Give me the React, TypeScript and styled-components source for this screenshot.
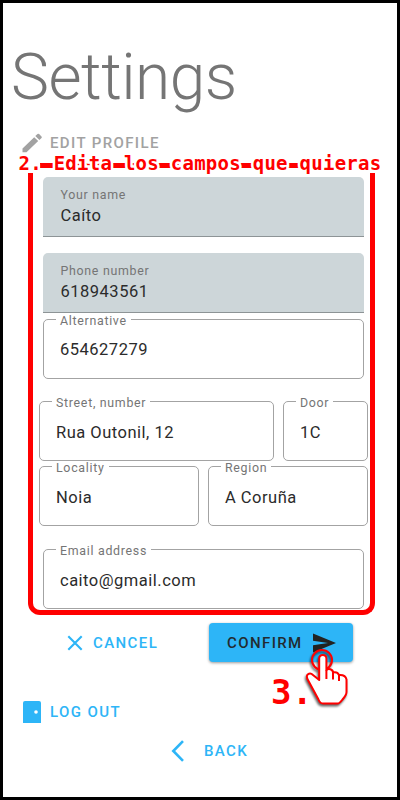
import React from "react";
import styled, { createGlobalStyle, css } from "styled-components";

const blue = "#2db5f7";
const red = "#ff0000";

const GlobalStyle = createGlobalStyle`
  *, *::before, *::after { box-sizing: border-box; }
  body { margin: 0; background: #fff; }
`;

const Screen = styled.main`
  position: relative;
  width: 400px;
  height: 800px;
  overflow: hidden;
  border: 3px solid #000;
  background: #fff;
  font-family: Roboto, "Liberation Sans", sans-serif;
  display: flex;
  flex-direction: column;
`;

const Title = styled.h1`
  margin: 32px 0 0 8px;
  height: 86px;
  font-size: 64px;
  line-height: 86px;
  font-weight: 300;
  letter-spacing: -0.5px;
  color: #757575;
  white-space: nowrap;
`;

const Action = styled.div<{ $color: string }>`
  display: flex;
  align-items: center;
  color: ${(p) => p.$color};
  font-size: 15px;
  line-height: 20px;
  font-weight: 500;
  letter-spacing: 1.4px;
  white-space: nowrap;
  svg { display: block; flex: none; }
`;

const EditProfile = styled(Action)`
  margin: 12px 0 0 18px;
  height: 20px;
  gap: 7px;
  letter-spacing: 1.38px;
`;

const Form = styled.form`
  display: flex;
  flex-direction: column;
  margin-top: 24px;
`;

const Row = styled.div<{ $top?: number; $inset?: boolean; $columns?: string }>`
  display: grid;
  grid-template-columns: ${(p) => p.$columns ?? "1fr"};
  gap: 9px;
  width: ${(p) => (p.$inset ? 321 : 329)}px;
  margin: ${(p) => p.$top ?? 0}px 0 0 ${(p) => (p.$inset ? 40 : 36)}px;
`;

const FieldBox = styled.label<{ $filled?: boolean }>`
  position: relative;
  display: flex;
  flex-direction: column;
  height: 60px;
  ${(p) =>
    p.$filled
      ? css`
          padding: 10px 0 0 17.5px;
          background: #cdd6d9;
          border-bottom: 1px solid #8d9496;
          border-radius: 5px 5px 0 0;
        `
      : css`
          padding: 19px 0 0 16px;
          border: 1px solid #a3a3a3;
          border-radius: 5px;
          ${Row}:not(:nth-child(3)) > & {
            padding-top: 20px;
          }
        `}
`;

const Caption = styled.span<{ $filled?: boolean }>`
  font-size: 12.4px;
  line-height: 16px;
  letter-spacing: 0.7px;
  color: #757575;
  white-space: nowrap;
  ${(p) =>
    !p.$filled &&
    css`
      position: absolute;
      top: -7px;
      left: 12px;
      padding: 0 4px;
      background: linear-gradient(#fff, #fff) 0 5px / 100% 4px no-repeat;
    `}
`;

const Value = styled.span<{ $filled?: boolean }>`
  margin-top: ${(p) => (p.$filled ? 2 : 0)}px;
  font-size: 16.5px;
  line-height: 22px;
  letter-spacing: 0.5px;
  color: #2b2b2b;
  white-space: nowrap;
`;

const Buttons = styled.div`
  display: flex;
  align-items: center;
  justify-content: space-between;
  margin-top: 14px;
  padding: 0 44px 0 64px;
  height: 39px;
`;

const Cancel = styled(Action)`
  gap: 10px;
`;

const Confirm = styled(Action)`
  width: 144px;
  height: 39px;
  padding-left: 18px;
  gap: 10px;
  border-radius: 4px;
  background: ${blue};
  box-shadow: 0 1px 3px rgba(0, 0, 0, 0.4);
`;

const LogOut = styled(Action)`
  margin: 38px 0 0 20px;
  height: 24px;
  gap: 9px;
`;

const Back = styled(Action)`
  margin: 15px 0 0 168px;
  height: 24px;
  gap: 20px;
`;

const Highlight = styled.div`
  position: absolute;
  left: 25px;
  top: 170px;
  width: 347px;
  height: 442px;
  border: 5px solid ${red};
  border-top: 0;
  border-radius: 0 0 12px 12px;
  pointer-events: none;

  &::before {
    content: "";
    position: absolute;
    top: -10px;
    left: 7px;
    right: 67px;
    height: 5px;
    background: ${red};
  }
`;

const Note = styled.div<{ $x: number; $y: number; $size: number; $spacing: number }>`
  position: absolute;
  left: ${(p) => p.$x}px;
  top: ${(p) => p.$y}px;
  font: 700 ${(p) => p.$size}px / 1.2 "DejaVu Sans Mono", monospace;
  letter-spacing: ${(p) => p.$spacing}px;
  color: ${red};
  white-space: nowrap;
  -webkit-text-stroke: 5px #fff;
  paint-order: stroke fill;
  pointer-events: none;
`;

const Pointer = styled.svg`
  position: absolute;
  left: 297px;
  top: 640px;
  filter: drop-shadow(-1px 2px 1px rgba(0, 0, 0, 0.6));
  pointer-events: none;
`;

type FieldProps = { label: string; value: string; filled?: boolean };

const Field = ({ label, value, filled }: FieldProps) => (
  <FieldBox $filled={filled}>
    <Caption $filled={filled}>{label}</Caption>
    <Value $filled={filled}>{value}</Value>
  </FieldBox>
);

export default function App() {
  return (
    <>
      <GlobalStyle />
      <Screen>
        <Title>Settings</Title>
        <EditProfile $color="#a2a2a2">
          <svg width="22" height="20" viewBox="0 0 22 20" fill="currentColor">
            <path d="M1.5 15.5 13.2 4.2l4 3.8L5.5 19.2h-4zM14.3 3.1l2.2-2.1q.8-.7 1.6 0l2.4 2.4q.8.8 0 1.5l-2.1 2z" />
          </svg>
          EDIT PROFILE
        </EditProfile>
        <Form>
          <Row $inset>
            <Field filled label="Your name" value="Caíto" />
          </Row>
          <Row $inset $top={16}>
            <Field filled label="Phone number" value="618943561" />
          </Row>
          <Row $inset $top={6}>
            <Field label="Alternative" value="654627279" />
          </Row>
          <Row $top={22} $columns="235px 85px">
            <Field label="Street, number" value="Rua Outonil, 12" />
            <Field label="Door" value="1C" />
          </Row>
          <Row $top={5} $columns="160px 160px">
            <Field label="Locality" value="Noia" />
            <Field label="Region" value="A Coruña" />
          </Row>
          <Row $inset $top={23}>
            <Field label="Email address" value="caito@gmail.com" />
          </Row>
        </Form>
        <Buttons>
          <Cancel $color={blue}>
            <svg width="16" height="16" viewBox="0 0 16 16" fill="none" stroke="currentColor" strokeWidth="2.1">
              <path d="M1.3 1.3 14.7 14.7M14.7 1.3 1.3 14.7" />
            </svg>
            CANCEL
          </Cancel>
          <Confirm $color="#222b30">
            CONFIRM
            <svg width="23" height="20" viewBox="0 0 23 20" fill="#222">
              <path d="M0 .5 23 10 0 19.5V12.2L15 10 0 7.8z" />
            </svg>
          </Confirm>
        </Buttons>
        <LogOut $color={blue}>
          <svg width="18" height="22" viewBox="0 0 18 22">
            <path d="M2 0H16Q18 0 18 2V22H0V2Q0 0 2 0z" fill="currentColor" />
            <circle cx="13" cy="11" r="1.8" fill="#fff" />
          </svg>
          LOG OUT
        </LogOut>
        <Back $color={blue}>
          <svg width="13" height="22" viewBox="0 0 13 22" fill="none" stroke="currentColor" strokeWidth="2.6">
            <path d="M12 1.2 2.3 11 12 20.8" />
          </svg>
          BACK
        </Back>
        <Highlight />
        <Note $x={15.5} $y={149} $size={19} $spacing={0.27}>
          2. Edita los campos que quieras
        </Note>
        <Note $x={268} $y={669} $size={34} $spacing={0.6}>
          3.
        </Note>
        <Pointer width="54" height="68" viewBox="0 0 54 68">
          <circle cx="22" cy="17" r="10" fill="none" stroke={red} strokeWidth="2" />
          <path
            d="M19.2 37V15.500q0-3.500 3.600-3.500t3.600 3.500V27q1.500-1.500 4-.8 2.600.8 2.600 3.300 4.500-1 6 2.500 6.500-.5 7.500 4.500V49q0 3-4 7.500-3 4-5 4H23q-3 0-4.500-4L8.500 38Q5.500 33 8 31.200q2.500-1.800 5 .8z"
            fill="#fff"
            stroke={red}
            strokeWidth="2"
            strokeLinejoin="round"
          />
          <path d="M26.400 27v9M33 29.500v7M39 32v6" fill="none" stroke={red} strokeWidth="2" />
        </Pointer>
      </Screen>
    </>
  );
}
